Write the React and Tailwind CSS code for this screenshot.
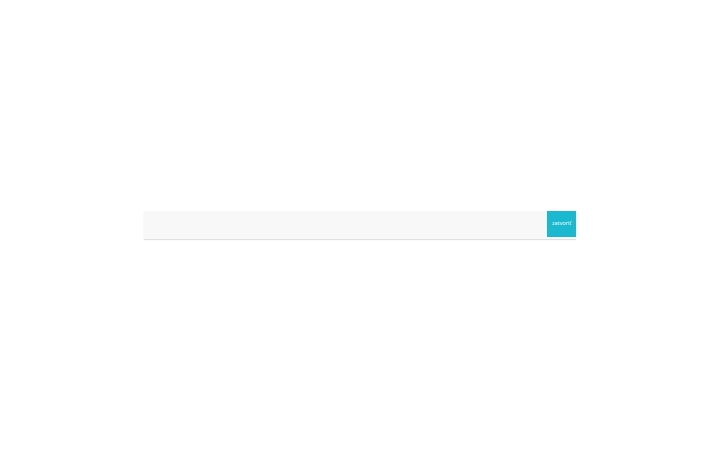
export default function App() {
  return (
    <div className="flex h-[450px] w-[720px] items-center justify-center bg-white font-['Open_Sans',sans-serif]">
      <div className="flex h-[28px] w-[432px] items-start justify-end bg-[#f8f8f8] shadow-[0_1px_1px_rgba(0,0,0,0.12)]">
        <button className="flex h-[26px] w-[29px] items-center justify-center bg-[#1bb9cf] text-[5.5px] leading-none text-white">
          zatvoriť
        </button>
      </div>
    </div>
  );
}
